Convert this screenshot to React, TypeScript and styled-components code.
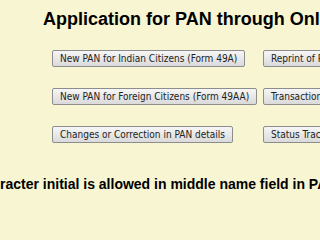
import styled, { createGlobalStyle } from "styled-components";

const GlobalStyle = createGlobalStyle`
  html, body {
    margin: 0;
    padding: 0;
    background: #f8f6d2;
    overflow: hidden;
  }
`;

const Page = styled.div`
  width: 320px;
  height: 200px;
  overflow: hidden;
  background: #f8f6d2;
  font-family: "Liberation Sans", Arial, sans-serif;
`;

const Title = styled.h1`
  margin: 0;
  padding: 9px 0 0 43px;
  font-size: 18px;
  font-weight: bold;
  color: #000;
  white-space: nowrap;
`;

const Grid = styled.div`
  display: grid;
  grid-template-columns: 211px auto;
  row-gap: 21px;
  padding: 20px 0 0 52px;
  align-items: start;
`;

const Button = styled.button`
  justify-self: start;
  height: 17px;
  padding: 0 7px;
  border: 1px solid #8d8d8d;
  border-radius: 2px;
  background: linear-gradient(#f6f6f6, #e8e8e8 50%, #dadada);
  font-family: "DejaVu Sans", sans-serif;
  font-stretch: condensed;
  font-size: 10px;
  color: #222;
  white-space: nowrap;
  line-height: 15px;
`;

const Notice = styled.p`
  margin: 0;
  padding-top: 33px;
  font-size: 14px;
  font-weight: bold;
  color: #000;
  white-space: nowrap;
`;

const buttons = [
  ["New PAN for Indian Citizens (Form 49A)", "Reprint of PAN Card"],
  ["New PAN for Foreign Citizens (Form 49AA)", "Transaction Status"],
  ["Changes or Correction in PAN details", "Status Track"],
];

export default function App() {
  return (
    <Page>
      <GlobalStyle />
      <Title>Application for PAN through Online</Title>
      <Grid>
        {buttons.flat().map((label) => (
          <Button key={label}>{label}</Button>
        ))}
      </Grid>
      <Notice>racter initial is allowed in middle name field in PAN application</Notice>
    </Page>
  );
}
